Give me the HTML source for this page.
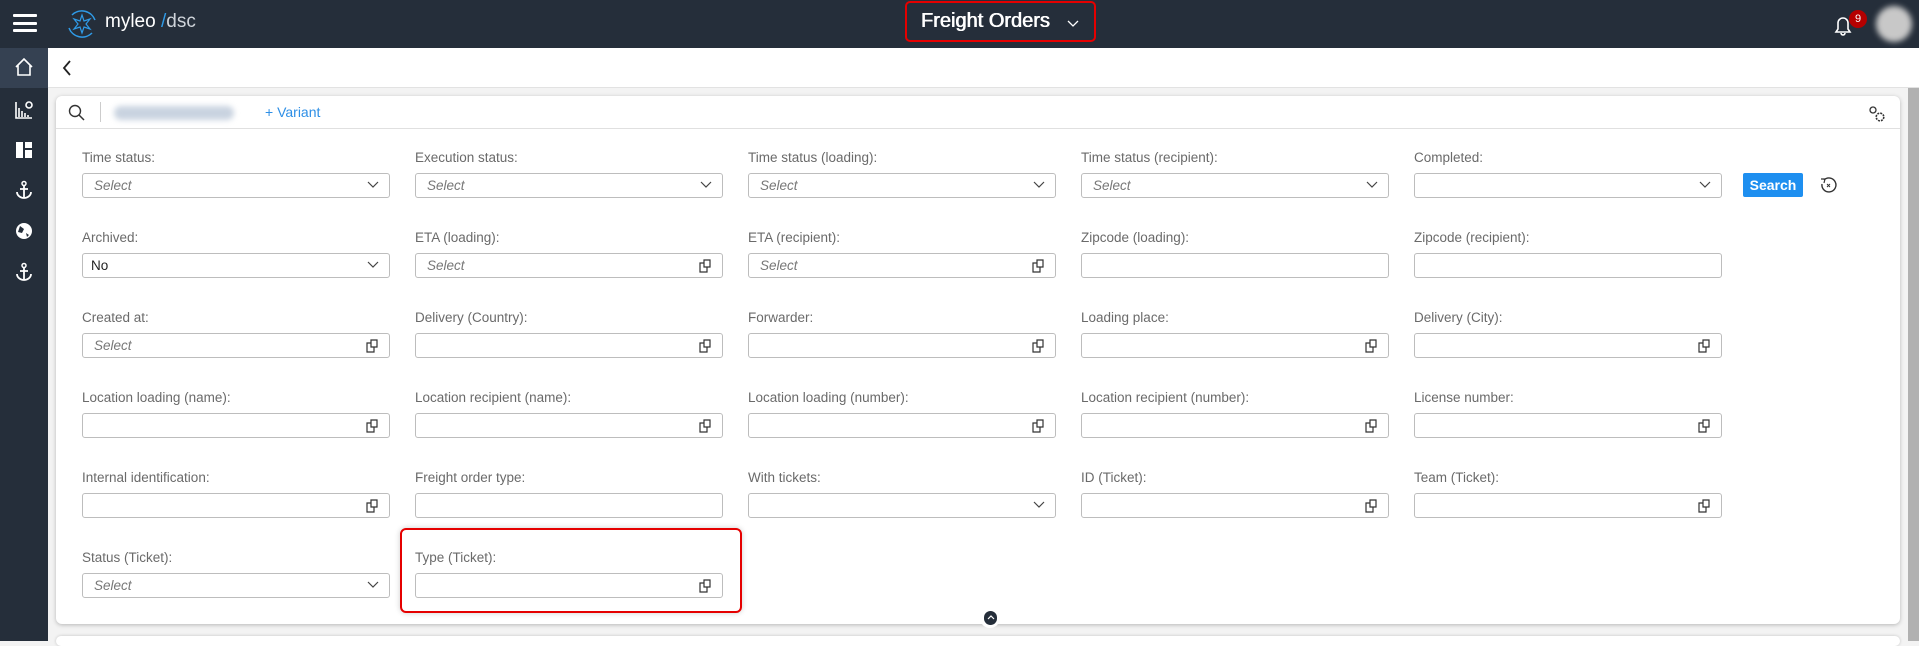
<!DOCTYPE html>
<html><head><meta charset="utf-8"><style>
*{box-sizing:border-box;margin:0;padding:0}
body{width:1919px;height:641px;overflow:hidden;background:#f3f3f3;font-family:"Liberation Sans",sans-serif;position:relative}
.hdr{position:absolute;left:0;top:0;width:1919px;height:48px;background:#252e3a}
.side{position:absolute;left:0;top:48px;width:48px;height:593px;background:#252e3a}
.back{position:absolute;left:48px;top:48px;width:1871px;height:40px;background:#fff;border-bottom:1px solid #e2e2e2}
.card{position:absolute;left:56px;top:96px;width:1844px;height:528px;background:#fff;border-radius:6px;box-shadow:0 1px 4px rgba(0,0,0,.25)}
.tb{position:absolute;left:0;top:0;width:100%;height:33px;border-bottom:1px solid #e0e0e0}
.lbl{position:absolute;font-size:13.5px;color:#6a6a6a}
.inp{position:absolute;width:308px;height:25px;border:1px solid #bdbdbd;border-radius:3px;background:#fff;font-size:13.5px}
.inp i{position:absolute;left:11px;top:4px;color:#777}
.inp b{position:absolute;left:8px;top:4px;font-weight:normal;color:#222}
.chev{position:absolute;right:10px;top:7px}
.cp{position:absolute;right:10px;top:5px}
.scroll{position:absolute;left:1908px;top:88px;width:11px;height:553px;background:#b1b1b1}
</style></head><body>
<div class="hdr">
 <div style="position:absolute;left:13px;top:14px;width:24px;height:3px;background:#fff;border-radius:1px"></div>
 <div style="position:absolute;left:13px;top:22px;width:24px;height:3px;background:#fff;border-radius:1px"></div>
 <div style="position:absolute;left:13px;top:29px;width:24px;height:3px;background:#fff;border-radius:1px"></div>
 <svg style="position:absolute;left:65px;top:7px" width="34" height="34" viewBox="0 0 34 34"><path d="M7 8 A14 14 0 0 1 30 13" fill="none" stroke="#2f9be8" stroke-width="1.5"/><path d="M27 26 A14 14 0 0 1 4 21" fill="none" stroke="#2f9be8" stroke-width="1.5"/><path d="M17 8 L19 14 L25 12 L21 17 L25 22 L19 20 L17 26 L15 20 L9 22 L13 17 L9 12 L15 14Z" fill="none" stroke="#2f9be8" stroke-width="1.2"/></svg>
 <div style="position:absolute;left:105px;top:11px;font-size:19px;color:#fff">myleo<span style="color:#2f9be8"> /</span><span style="color:#cfd4da">dsc</span></div>
 <div style="position:absolute;left:905px;top:1px;width:191px;height:41px;border:2px solid #e50000;border-radius:5px"></div>
 <div style="position:absolute;left:921px;top:10px;font-size:20px;color:#fff;font-weight:normal;text-shadow:0.4px 0 0 #fff,-0.3px 0 0 #fff">Freight Orders</div>
 <svg style="position:absolute;left:1067px;top:20px" width="12" height="8"><path d="M1 1 L6 6 L11 1" fill="none" stroke="#fff" stroke-width="1.3"/></svg>
 <svg style="position:absolute;left:1831px;top:13px" width="24" height="24" viewBox="0 0 24 24"><path d="M5 19 L19 19 L17 16 L17 10 A5 5 0 0 0 7 10 L7 16Z M10 20 A2 2 0 0 0 14 20" fill="none" stroke="#fff" stroke-width="1.6"/></svg>
 <div style="position:absolute;left:1849px;top:10px;width:18px;height:18px;border-radius:9px;background:#b50000;color:#fff;font-size:11px;text-align:center;line-height:18px">9</div>
 <div style="position:absolute;left:1876px;top:6px;width:36px;height:36px;border-radius:18px;background:#c8c8c8;filter:blur(3px)"></div>
</div>
<div class="side">
 <div style="position:absolute;left:0;top:0;width:48px;height:40px;background:#354152"></div>
 <svg style="position:absolute;left:14px;top:9px" width="20" height="20"><path d="M2 10 L10 2 L18 10 M4 8 L4 18 L16 18 L16 8" fill="none" stroke="#fff" stroke-width="1.6"/></svg>
 <svg style="position:absolute;left:14px;top:52px" width="20" height="20"><path d="M2 2 L2 18 L18 18 M5 17 V8 M8 17 V11 M11 17 V13 M14 17 V15" stroke="#fff" stroke-width="1.6" fill="none"/><circle cx="15" cy="5" r="3" fill="none" stroke="#fff" stroke-width="1.6"/></svg>
 <svg style="position:absolute;left:15px;top:93px" width="18" height="18"><path d="M1 1 H8 V17 H1Z M10 1 H17 V7 H10Z M10 9 H17 V17 H10Z" fill="#fff"/></svg>
 <svg style="position:absolute;left:14px;top:132px" width="20" height="20"><circle cx="10" cy="3.5" r="2" fill="none" stroke="#fff" stroke-width="1.5"/><path d="M10 5.5 V18 M6 9 H14 M3 12 A7 6 0 0 0 17 12" fill="none" stroke="#fff" stroke-width="1.8"/></svg>
 <svg style="position:absolute;left:14px;top:173px" width="20" height="20"><circle cx="10" cy="10" r="8" fill="#fff"/><path d="M6 5 L10 8 L8 12 L4 11 Z M12 12 L15 14 L13 16Z" fill="#252e3a"/></svg>
 <svg style="position:absolute;left:14px;top:214px" width="20" height="20"><circle cx="10" cy="3.5" r="2" fill="none" stroke="#fff" stroke-width="1.5"/><path d="M10 5.5 V18 M6 9 H14 M3 12 A7 6 0 0 0 17 12" fill="none" stroke="#fff" stroke-width="1.8"/></svg>
</div>
<div class="back"><svg style="position:absolute;left:14px;top:12px" width="10" height="16"><path d="M8 1 L2 8 L8 15" fill="none" stroke="#222" stroke-width="1.8"/></svg></div>
<div class="scroll"></div>
<div style="position:absolute;left:56px;top:636px;width:1844px;height:10px;background:#fff;border-radius:6px;box-shadow:0 0 3px rgba(0,0,0,.2)"></div>
<div class="card">
 <div class="tb">
  <svg style="position:absolute;left:12px;top:8px" width="18" height="18"><circle cx="7" cy="7" r="5.5" fill="none" stroke="#333" stroke-width="1.4"/><path d="M11 11 L16 16" stroke="#333" stroke-width="1.5"/></svg>
  <div style="position:absolute;left:44px;top:6px;width:1px;height:20px;background:#ccc"></div>
  <div style="position:absolute;left:58px;top:10px;width:120px;height:14px;border-radius:7px;background:#c9d3e0;filter:blur(3px)"></div>
  <div style="position:absolute;left:209px;top:8px;font-size:14px;color:#2e8fe6">+ Variant</div>
  <svg style="position:absolute;left:1812px;top:9px" width="18" height="18"><circle cx="5" cy="5" r="3" fill="none" stroke="#333" stroke-width="1.3"/><circle cx="12" cy="12" r="3.8" fill="none" stroke="#333" stroke-width="1.6" stroke-dasharray="2 1"/></svg>
 </div>
</div>
<div id="f"></div>
<div style="position:absolute;left:400px;top:528px;width:342px;height:85px;border:2px solid #e50000;border-radius:6px;box-shadow:0 0 6px rgba(0,0,0,.2)"></div>
<div style="position:absolute;left:1743px;top:173px;width:60px;height:24px;background:#1e8ff0;border-radius:2px;color:#fff;font-weight:bold;font-size:14px;text-align:center;line-height:24px">Search</div>
<svg style="position:absolute;left:1819px;top:176px" width="18" height="18"><path d="M5 4 A7 7 0 1 1 3 8" fill="none" stroke="#333" stroke-width="1.4"/><path d="M2 3 L6 3 L5 7" fill="none" stroke="#333" stroke-width="1.2"/><path d="M8 8 L11 11 M11 8 L8 11" stroke="#333" stroke-width="1"/></svg>
<div style="position:absolute;left:980px;top:608px;width:20px;height:20px;border-radius:10px;background:#fff"></div>
<div style="position:absolute;left:984px;top:611px;width:13px;height:14px;border-radius:7px;background:#252e3a"></div>
<svg style="position:absolute;left:987px;top:614px" width="8" height="6"><path d="M1 5 L4 2 L7 5" fill="none" stroke="#fff" stroke-width="1.2"/></svg>
<script>
var C=' <svg class="chev" width="12" height="8"><path d="M1 1 L6 6 L11 1" fill="none" stroke="#444" stroke-width="1.2"/></svg>';
var P=' <svg class="cp" width="14" height="14"><path d="M6 1 H12 V8 H6Z" fill="none" stroke="#333" stroke-width="1.2"/><path d="M6 4 H2 V13 H9 V8" fill="none" stroke="#333" stroke-width="1.2"/></svg>';
var rows=[
[["Time status:","s","Select"],["Execution status:","s","Select"],["Time status (loading):","s","Select"],["Time status (recipient):","s","Select"],["Completed:","s",""]],
[["Archived:","s","No"],["ETA (loading):","c","Select"],["ETA (recipient):","c","Select"],["Zipcode (loading):","n",""],["Zipcode (recipient):","n",""]],
[["Created at:","c","Select"],["Delivery (Country):","c",""],["Forwarder:","c",""],["Loading place:","c",""],["Delivery (City):","c",""]],
[["Location loading (name):","c",""],["Location recipient (name):","c",""],["Location loading (number):","c",""],["Location recipient (number):","c",""],["License number:","c",""]],
[["Internal identification:","c",""],["Freight order type:","n",""],["With tickets:","s",""],["ID (Ticket):","c",""],["Team (Ticket):","c",""]],
[["Status (Ticket):","s","Select"],["Type (Ticket):","c",""]]];
var h='';
rows.forEach(function(r,i){r.forEach(function(f,j){var x=82+333*j,y=173+80*i;
h+='<div class="lbl" style="left:'+x+'px;top:'+(y-23)+'px">'+f[0]+'</div><div class="inp" style="left:'+x+'px;top:'+y+'px">'+
(f[2]=="No"?'<b>No</b>':(f[2]?'<i>'+f[2]+'</i>':''))+(f[1]=="s"?C:f[1]=="c"?P:'')+'</div>';});});
document.getElementById('f').innerHTML=h;
</script>
</body></html>
